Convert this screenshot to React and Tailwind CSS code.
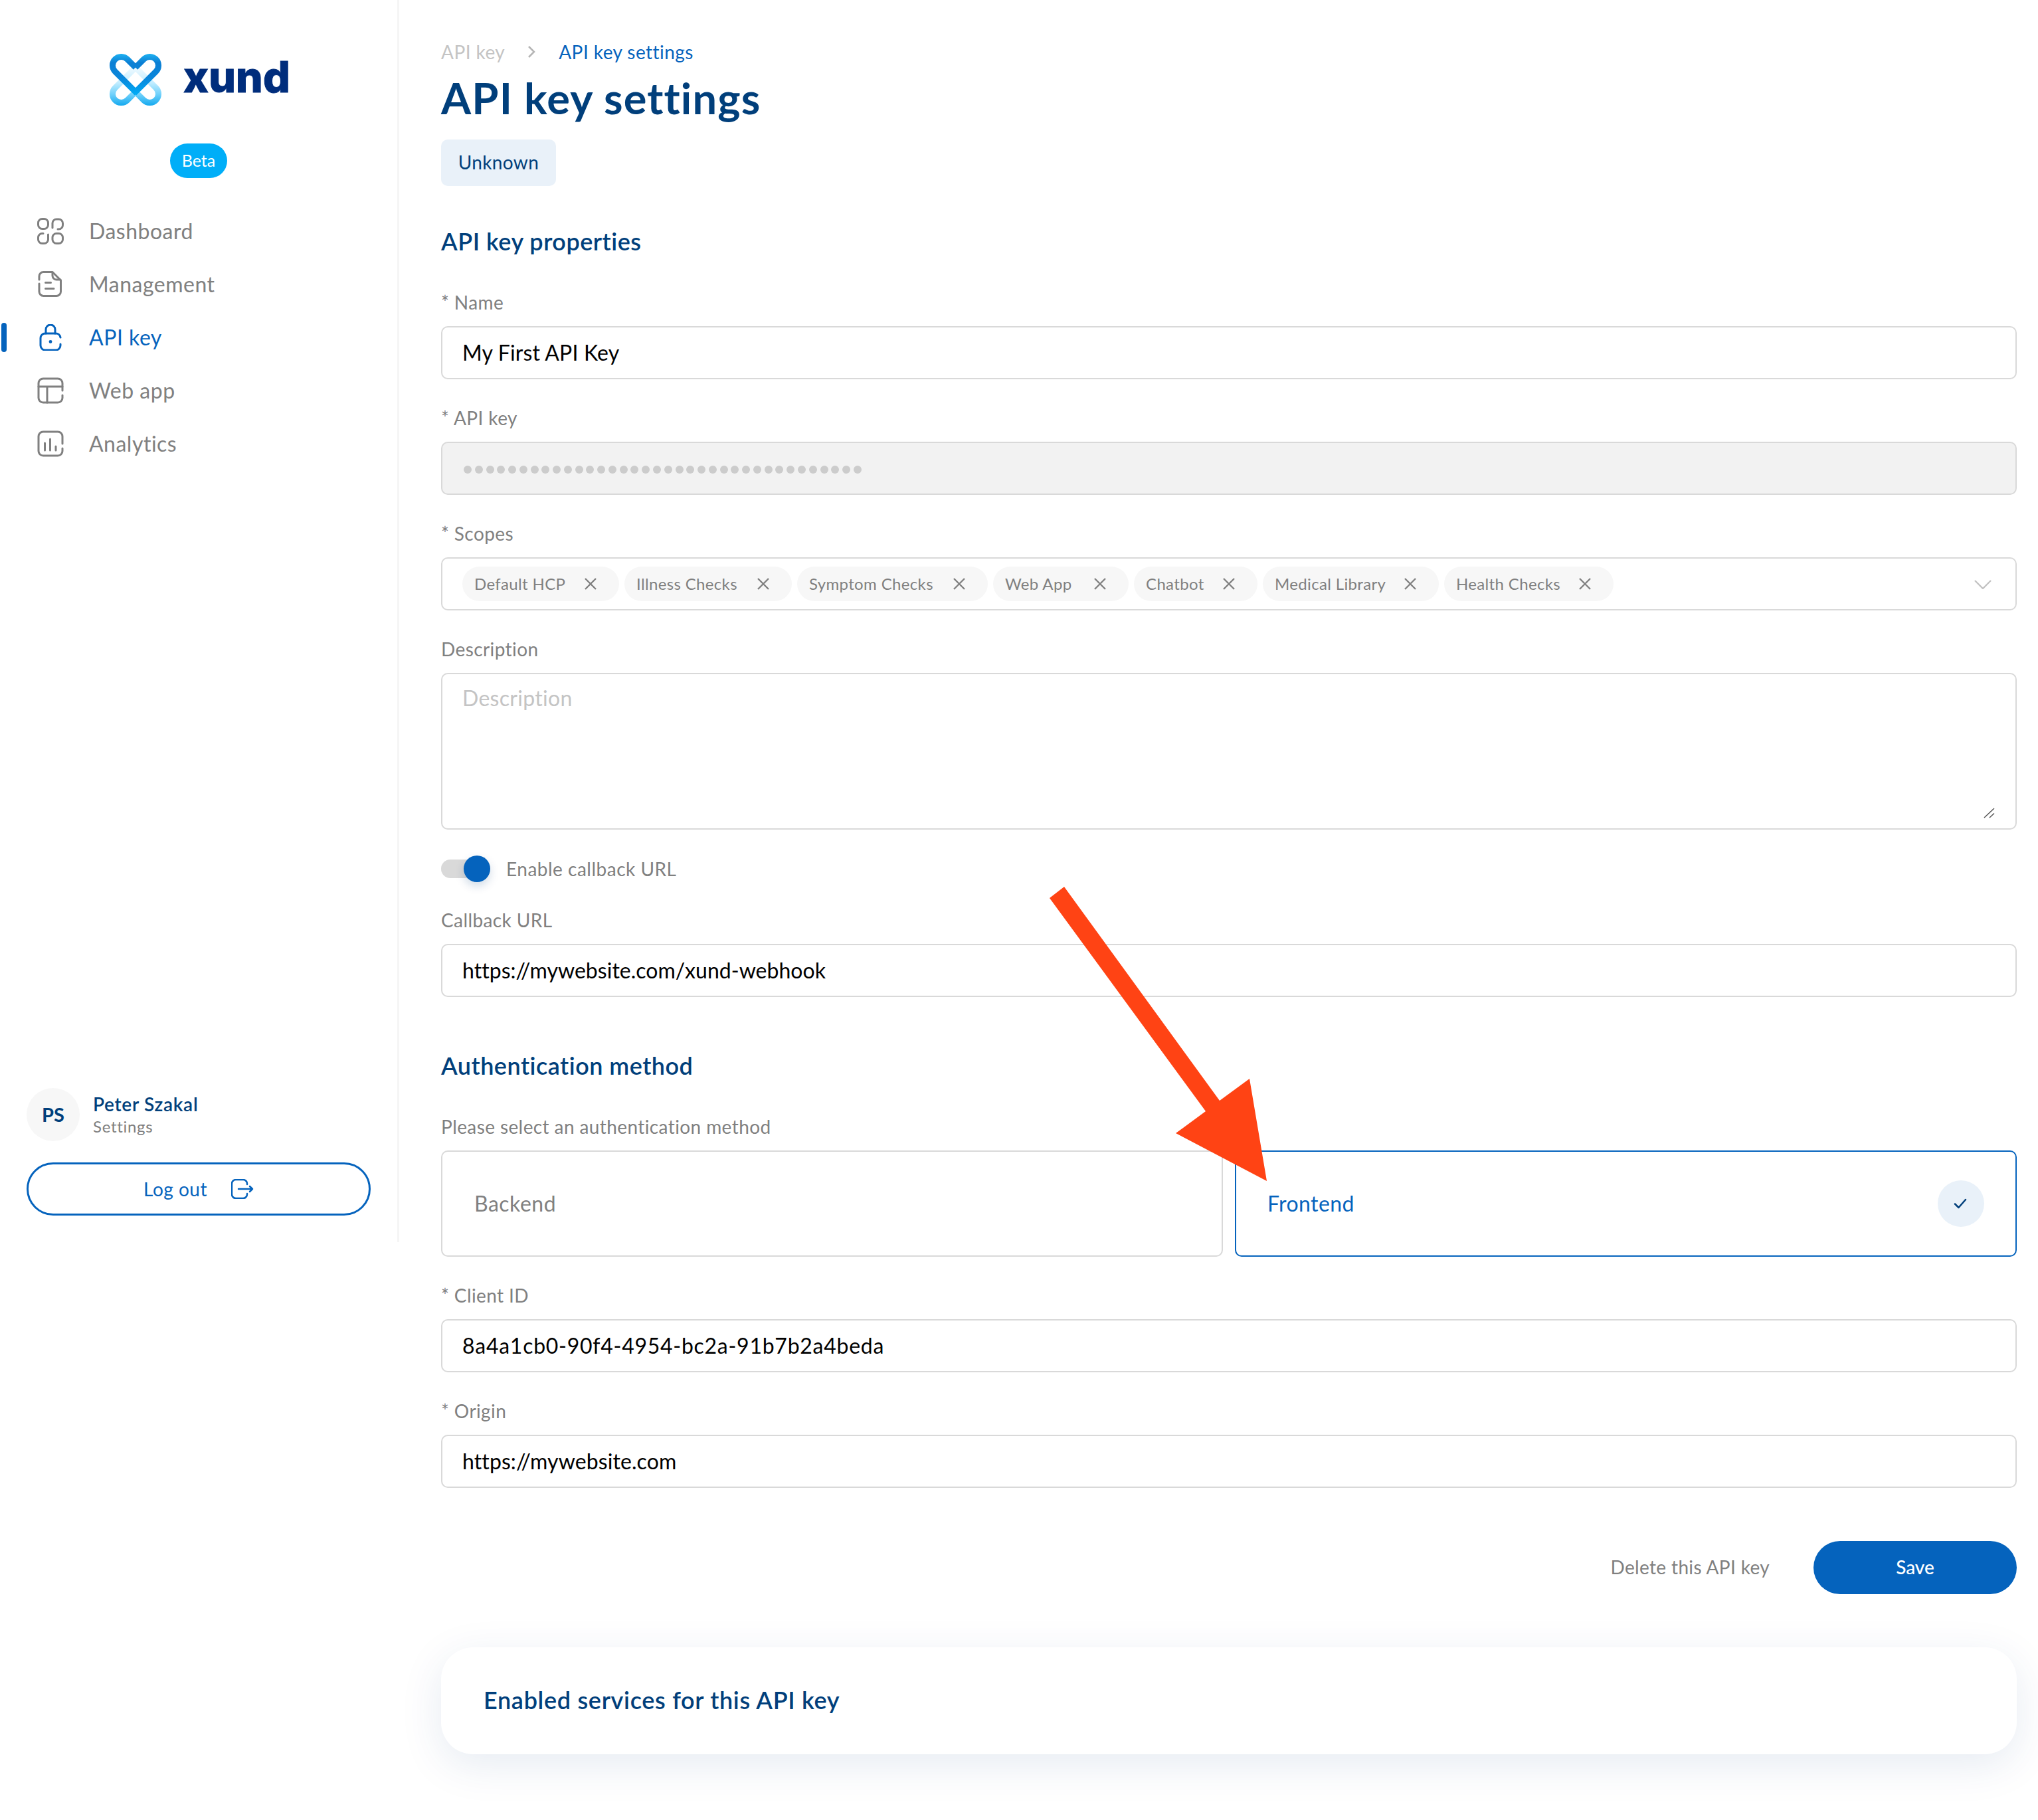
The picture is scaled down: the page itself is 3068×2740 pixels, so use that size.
import React from "react";

const Icon = ({ className, children, size = 40, vb }) => (
  <svg width={size} height={size} viewBox={vb || `0 0 ${size} ${size}`} fill="none" stroke="currentColor" strokeWidth="3" strokeLinecap="round" strokeLinejoin="round" className={className}>
    {children}
  </svg>
);

const nav = [
  {
    label: "Dashboard",
    icon: (
      <>
        <rect x="1.5" y="1.5" width="15" height="15" rx="6" />
        <rect x="23" y="23.5" width="15.5" height="15" rx="6" />
        <path d="M23 15V8a6 6 0 0 1 6-6h3.5a6 6 0 0 1 6 6v3a6 6 0 0 1-6 6H31" />
        <path d="M16.5 25v7.5a6 6 0 0 1-6 6H7.5a6 6 0 0 1-6-6v-3a6 6 0 0 1 6-6H9" />
      </>
    ),
  },
  {
    label: "Management",
    icon: (
      <>
        <path d="M3 13V8a6.5 6.5 0 0 1 6.5-6.5H23L35.5 14v17a6.5 6.5 0 0 1-6.5 6.5H9.5A6.5 6.5 0 0 1 3 31V19" />
        <path d="M23 2v5a6 6 0 0 0 6 6h6" />
        <path d="M12.5 17.5h8M12.5 26.5h12.5" />
      </>
    ),
  },
  {
    label: "API key",
    active: true,
    icon: (
      <>
        <path d="M35 20a7 7 0 0 0-7-6H12a7 7 0 0 0-7 7v11a7 7 0 0 0 7 7h16a7 7 0 0 0 7-7v-2" />
        <path d="M13 14V8a7 7 0 0 1 14 0v6" />
        <circle cx="20" cy="26.5" r="2.4" fill="currentColor" stroke="none" />
      </>
    ),
  },
  {
    label: "Web app",
    icon: (
      <>
        <path d="M38 20V9a7 7 0 0 0-7-7H9a7 7 0 0 0-7 7v22a7 7 0 0 0 7 7h22a7 7 0 0 0 7-7v-4" />
        <path d="M2 14h36M15 14v24" />
      </>
    ),
  },
  {
    label: "Analytics",
    icon: (
      <>
        <path d="M38 20V9a7 7 0 0 0-7-7H9a7 7 0 0 0-7 7v22a7 7 0 0 0 7 7h22a7 7 0 0 0 7-7v-4" />
        <path d="M11.5 19v11M19.5 13v17M28 24v6" />
      </>
    ),
  },
];

const chips = [
  { label: "Default HCP", w: "w-[236px]" },
  { label: "Illness Checks", w: "w-[252px]" },
  { label: "Symptom Checks", w: "w-[287px]" },
  { label: "Web App", w: "w-[204px]" },
  { label: "Chatbot", w: "w-[186px]" },
  { label: "Medical Library", w: "w-[265px]" },
  { label: "Health Checks", w: "w-[255px]" },
];

const Logo = () => (
  <svg width="78" height="78" viewBox="0 0 78 78" fill="none" strokeWidth="9">
    <defs>
      <linearGradient id="upper" gradientUnits="userSpaceOnUse" x1="0" y1="0" x2="0" y2="60">
        <stop offset="0" stopColor="#1fb2f2" />
        <stop offset="0.22" stopColor="#0b7fd4" />
        <stop offset="0.6" stopColor="#0a86da" />
        <stop offset="1" stopColor="#00a9f4" />
      </linearGradient>
      <linearGradient id="lower" gradientUnits="userSpaceOnUse" x1="0" y1="20" x2="0" y2="78">
        <stop offset="0" stopColor="#f0faff" />
        <stop offset="0.4" stopColor="#c4edff" />
        <stop offset="0.7" stopColor="#72d2fb" />
        <stop offset="1" stopColor="#14a9ef" />
      </linearGradient>
    </defs>
    <path d="M39 57.4L51.3 69.7A13 13 0 0 0 69.7 51.3L39 20.6" stroke="url(#lower)" />
    <path d="M39 57.4L26.7 69.7A13 13 0 0 1 8.3 51.3L39 20.6" stroke="url(#lower)" />
    <path d="M39 20.6L26.7 8.3A13 13 0 0 0 8.3 26.7L41 59.4" stroke="url(#upper)" />
    <path d="M39 20.6L51.3 8.3A13 13 0 0 1 69.7 26.7L37 59.4" stroke="url(#upper)" />
  </svg>
);

const Label = ({ children, className = "" }) => (
  <div className={`h-[36px] text-[28px] leading-[36px] text-[#808080] tracking-[0.4px] ${className}`}>{children}</div>
);

const Field = ({ label, value, className = "", track = "tracking-[0.2px]" }) => (
  <div className={className}>
    <Label>{label}</Label>
    <div className={`mt-[18px] flex h-[80px] items-center rounded-[10px] border-[2.5px] border-[#d9d9d9] bg-white pl-[30px] text-[32px] text-black ${track}`}>
      {value}
    </div>
  </div>
);

const H2 = ({ children, className = "" }) => (
  <h2 className={`h-[44px] text-[36px] font-semibold leading-[40px] text-[#013f7b] tracking-[0.5px] ${className}`}>{children}</h2>
);

export default function App() {
  return (
    <div className="relative flex w-full bg-white font-['Lato',sans-serif]">
      <aside className="flex h-[1870px] w-[601px] shrink-0 flex-col border-r-[3px] border-[#f5f5f5]">
        <div className="mt-[81px] flex items-start pl-[165px]">
          <Logo />
          <span className="ml-[33px] mt-[-4px] font-['Inter',sans-serif] text-[64px] font-extrabold leading-[78px] tracking-[0.2px] text-[#002d7c] [-webkit-text-stroke:1px_#002d7c]">xund</span>
        </div>
        <div className="ml-[256px] mt-[57px] flex h-[52px] w-[86px] items-center justify-center self-start rounded-full bg-[#00aef8] text-[25px] text-white">Beta</div>
        <nav className="mt-[40px] flex flex-col">
          {nav.map((n) => (
            <div key={n.label} className={`relative flex h-[80px] items-center pl-[56px] ${n.active ? "text-[#0563bd]" : "text-[#808080]"}`}>
              {n.active && <div className="absolute left-[2px] top-[18px] h-[44px] w-[8px] rounded-full bg-[#0563bd]" />}
              <Icon>{n.icon}</Icon>
              <span className="ml-[38px] text-[32px] tracking-[0.5px]">{n.label}</span>
            </div>
          ))}
        </nav>
        <div className="mt-auto flex items-center pl-[40px]">
          <div className="flex h-[80px] w-[80px] items-center justify-center rounded-full bg-[#f7f7f7] text-[29px] font-bold text-[#013f7b]">PS</div>
          <div className="ml-[20px] flex flex-col">
            <span className="text-[28px] font-semibold leading-[36px] text-[#013f7b] tracking-[0.7px]">Peter Szakal</span>
            <span className="text-[24px] leading-[32px] text-[#808080] tracking-[0.7px]">Settings</span>
          </div>
        </div>
        <div className="mb-[40px] ml-[40px] mt-[32px] flex h-[80px] w-[518px] items-center justify-center rounded-full border-[3px] border-[#0563bd] text-[#0563bd]">
          <span className="text-[28px] tracking-[0.5px]">Log out</span>
          <svg width="34" height="30" viewBox="0 0 34 30" fill="none" stroke="currentColor" strokeWidth="2.5" strokeLinecap="round" strokeLinejoin="round" className="ml-[36px]">
            <path d="M24 8V7a6 6 0 0 0-6-6H7a6 6 0 0 0-6 6v16a6 6 0 0 0 6 6h11a6 6 0 0 0 6-6v-1" />
            <path d="M11 15h21M28 11l4 4-4 4" />
          </svg>
        </div>
      </aside>

      <main className="min-w-0 flex-1 pb-[99px] pl-[63px] pr-[32px] pt-[60px]">
        <div className="flex h-[36px] items-center text-[28px] tracking-[0.45px]">
          <span className="text-[#c4c4c4]">API key</span>
          <svg width="12" height="20" viewBox="0 0 12 20" fill="none" stroke="#b5b5b5" strokeWidth="2.5" className="ml-[34px] mr-[35px]">
            <path d="M2 2l8 8-8 8" />
          </svg>
          <span className="text-[#0563bd]">API key settings</span>
        </div>
        <h1 className="mt-[13px] h-[76px] text-[65px] font-bold leading-[76px] text-[#013f7b] tracking-[1.15px]">API key settings</h1>
        <div className="mt-[25px] flex h-[70px] w-[173px] items-center justify-center rounded-[10px] bg-[#e9f1f9] pb-[3px] text-[28px] text-[#013f7b] tracking-[0.35px]">Unknown</div>

        <H2 className="mt-[63px]">API key properties</H2>
        <Field className="mt-[50px]" label="* Name" value="My First API Key" track="tracking-[0.15px]" />

        <div className="mt-[40px]">
          <Label>* API key</Label>
          <div className="mt-[18px] flex h-[80px] items-center gap-[4.77px] rounded-[10px] border-[2.5px] border-[#d9d9d9] bg-[#f2f2f2] pl-[32px] pt-[3px]">
            {Array.from({ length: 36 }).map((_, i) => (
              <span key={i} className="h-[12px] w-[12px] rounded-full bg-[#cccccc]" />
            ))}
          </div>
        </div>

        <div className="mt-[40px]">
          <Label>* Scopes</Label>
          <div className="relative mt-[18px] flex h-[80px] items-center gap-[8px] rounded-[10px] border-[2.5px] border-[#d9d9d9] bg-white pl-[30px]">
            {chips.map((c) => (
              <div key={c.label} className={`flex h-[52px] items-center justify-between rounded-[26px] bg-[#f7f7f7] pl-[18px] pr-[33px] text-[24px] text-[#808080] tracking-[0.35px] ${c.w}`}>
                <span>{c.label}</span>
                <svg width="20" height="20" viewBox="0 0 20 20" fill="none" stroke="#808080" strokeWidth="2.4">
                  <path d="M2 2l16 16M18 2L2 18" />
                </svg>
              </div>
            ))}
            <svg width="26" height="14" viewBox="0 0 26 14" fill="none" stroke="#c4c4c4" strokeWidth="2.4" className="absolute right-[36px] top-[32px]">
              <path d="M1 1l12 12L25 1" />
            </svg>
          </div>
        </div>

        <div className="mt-[40px]">
          <Label>Description</Label>
          <div className="relative mt-[18px] h-[236px] rounded-[10px] border-[2.5px] border-[#d9d9d9] bg-white pl-[30px] pt-[16px] text-[32px] leading-[40px] text-[#c4c4c4] tracking-[0.3px]">
            Description
            <svg width="18" height="16" viewBox="0 0 18 16" fill="none" stroke="#555555" strokeWidth="1.5" className="absolute bottom-[15px] right-[30px]">
              <path d="M1 15L16 1M9 15l7-6.5" />
            </svg>
          </div>
        </div>

        <div className="mt-[39px] flex h-[40px] items-center">
          <div className="relative h-[28px] w-[74px] rounded-full bg-[#d9d9d9]">
            <div className="absolute right-0 top-[-6px] h-[40px] w-[40px] rounded-full bg-[#0563bd] shadow-[0_6px_14px_rgba(1,63,123,0.18)]" />
          </div>
          <span className="ml-[24px] text-[28px] text-[#808080] tracking-[0.5px]">Enable callback URL</span>
        </div>

        <Field className="mt-[39px]" label="Callback URL" value="https://mywebsite.com/xund-webhook" track="tracking-[0.03px]" />

        <H2 className="mt-[83px]">Authentication method</H2>
        <Label className="mt-[50px]">Please select an authentication method</Label>
        <div className="mt-[18px] grid grid-cols-2 gap-[18px]">
          <div className="flex h-[160px] items-center rounded-[10px] border-[2.5px] border-[#d9d9d9] pl-[48px] text-[32px] text-[#808080] tracking-[0.5px]">Backend</div>
          <div className="flex h-[160px] items-center justify-between rounded-[10px] border-[2.5px] border-[#0563bd] pl-[47px] pr-[47px] text-[32px] text-[#0563bd] tracking-[0.4px]">
            <span>Frontend</span>
            <div className="flex h-[70px] w-[70px] items-center justify-center rounded-full bg-[#e9f1f9]">
              <svg width="20" height="16" viewBox="0 0 20 16" fill="none" stroke="#013f7b" strokeWidth="2.5" strokeLinecap="round" strokeLinejoin="round" className="mr-[2px]">
                <path d="M2 8.5l5.5 5.5L18 2" />
              </svg>
            </div>
          </div>
        </div>

        <Field className="mt-[40px]" label="* Client ID" value="8a4a1cb0-90f4-4954-bc2a-91b7b2a4beda" track="tracking-[0.73px]" />
        <Field className="mt-[40px]" label="* Origin" value="https://mywebsite.com" track="tracking-[0.1px]" />

        <div className="mt-[80px] flex h-[80px] items-center justify-end">
          <span className="pb-[2px] text-[28px] text-[#808080] tracking-[0.35px]">Delete this API key</span>
          <div className="ml-[66px] flex h-[80px] w-[306px] items-center justify-center rounded-full bg-[#0563bd] pb-[2px] text-[28px] font-medium text-white">Save</div>
        </div>

        <div className="mt-[80px] flex h-[161px] items-center rounded-[48px] bg-white pb-[3px] pl-[64px] shadow-[0_16px_64px_rgba(1,63,123,0.1)]">
          <h2 className="text-[36px] font-semibold text-[#013f7b] tracking-[0.68px]">Enabled services for this API key</h2>
        </div>
      </main>

      <svg width="340" height="450" viewBox="1575 1333 340 450" className="pointer-events-none absolute left-[1575px] top-[1333px]">
        <polygon points="1602,1335 1836,1657 1881,1624 1907,1778 1770,1706 1815,1673 1580,1352" fill="#ff4314" />
      </svg>
    </div>
  );
}
